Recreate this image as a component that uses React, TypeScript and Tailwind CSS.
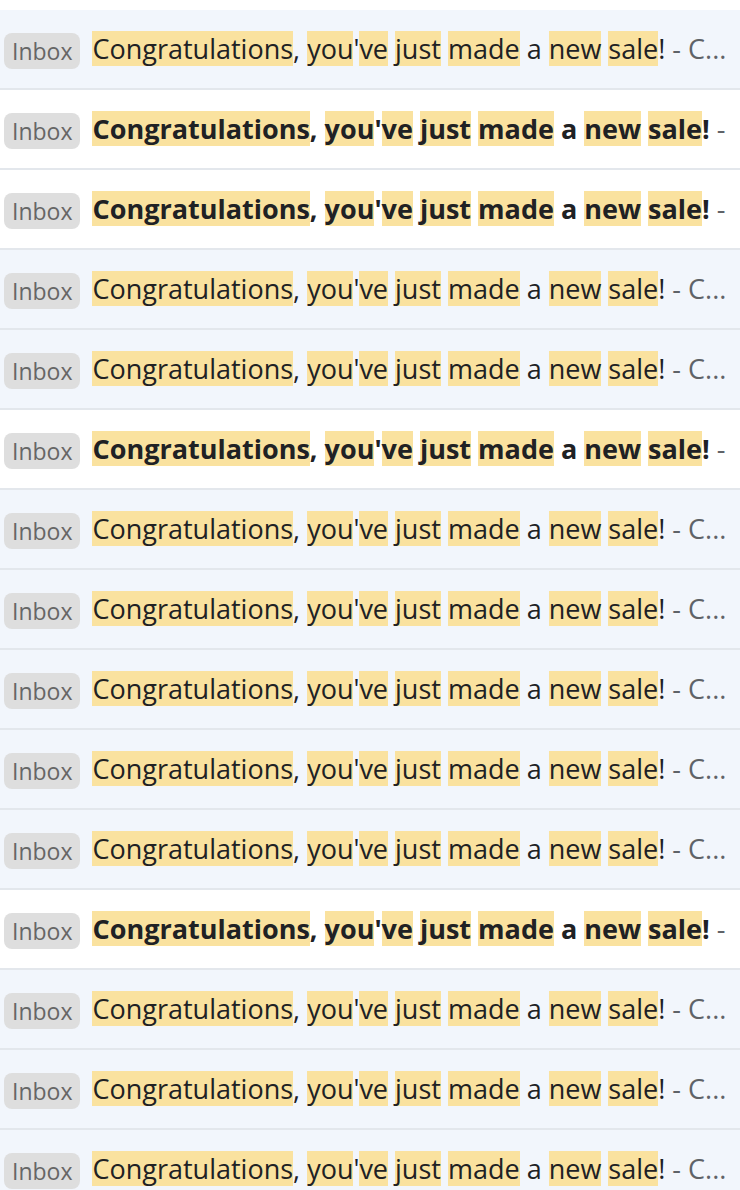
const rows = [false, true, true, false, false, true, false, false, false, false, false, true, false, false, false];

function Hl({ children }: { children: React.ReactNode }) {
    return <span className="inline-block bg-[#fae29f] leading-[35px] h-[35px]">{children}</span>;
}

function Row({ unread }: { unread: boolean }) {
    return (
        <div
            className={`flex items-center h-[80px] pl-[4px] border-b-2 border-[#e3e7ec] overflow-hidden whitespace-nowrap ${
                unread ? 'bg-white' : 'bg-[#f2f6fc]'
            }`}
        >
            {/* Label */}
            <span className="shrink-0 mt-[3px] h-[36px] px-[8px] rounded-[8px] bg-[#dedede] text-[#666666] text-[23px] leading-[36px]">
                Inbox
            </span>

            {/* Subject */}
            <div className={`ml-[12px] text-[27px] text-[#202124] ${unread ? 'font-bold' : 'font-normal'}`}>
                <Hl>Congratulations</Hl>, <Hl>you</Hl>'<Hl>ve</Hl> <Hl>just</Hl> <Hl>made</Hl> a <Hl>new</Hl>{' '}
                <Hl>sale</Hl>!
                <span className="font-normal text-[#5f6368]">{unread ? ' -' : ' - C...'}</span>
            </div>
        </div>
    );
}

export default function App() {
    return (
        <div className="w-[740px] h-[1190px] overflow-hidden bg-white pt-[10px]" style={{ fontFamily: '"Open Sans", sans-serif' }}>
            {rows.map((unread, i) => (
                <Row key={i} unread={unread} />
            ))}
        </div>
    );
}
